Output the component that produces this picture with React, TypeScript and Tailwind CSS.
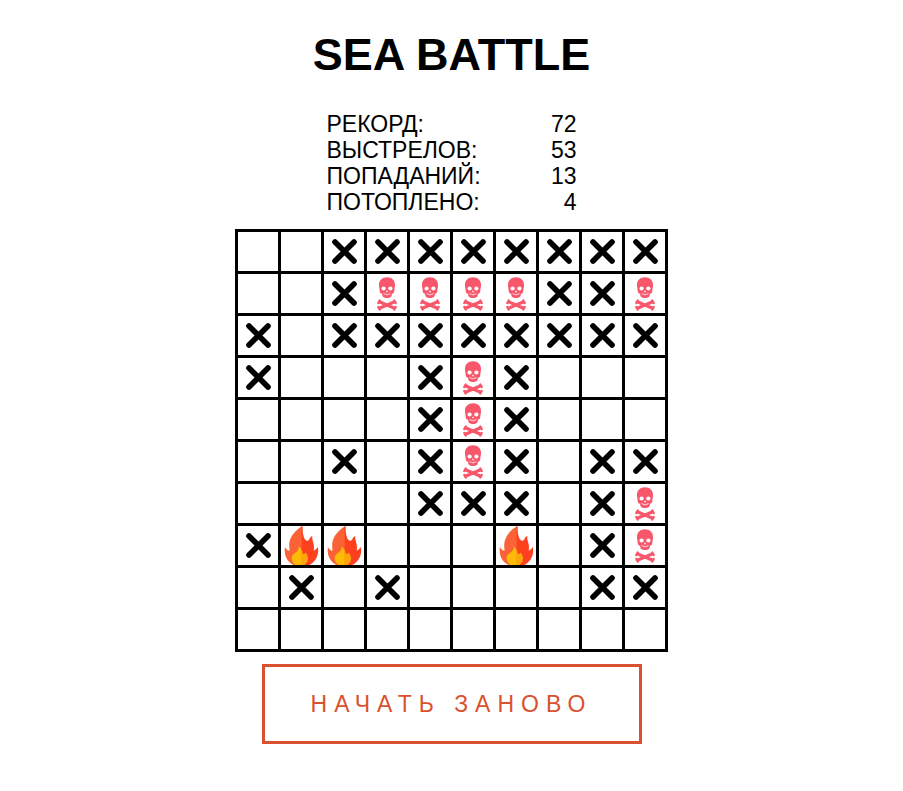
import React from "react";

type Mark = "." | "x" | "s" | "f";

// "." untouched, "x" miss, "s" sunk, "f" hit
const field: string[] = [
  "..xxxxxxxx",
  "..xssssxxs",
  "x.xxxxxxxx",
  "x...xsx...",
  "....xsx...",
  "..x.xsx.xx",
  "....xxx.xs",
  "xff...f.xs",
  ".x.x....xx",
  "..........",
];

const stats: [string, number][] = [
  ["РЕКОРД:", 72],
  ["ВЫСТРЕЛОВ:", 53],
  ["ПОПАДАНИЙ:", 13],
  ["ПОТОПЛЕНО:", 4],
];

const labels: Record<Mark, string> = {
  ".": "пусто",
  x: "мимо",
  s: "потоплен",
  f: "ранен",
};

function Miss() {
  return (
    <svg viewBox="0 0 40 39" className="block h-full w-full" aria-hidden="true">
      <path d="M11 10 30 29M30 10 11 29" stroke="#000" strokeWidth="5.6" strokeLinecap="round" />
    </svg>
  );
}

function Skull() {
  return (
    <svg viewBox="0 0 40 39" className="block h-full w-full" aria-hidden="true">
      <path
        fill="#f8566a"
        d="M20 3.300C15 3.300 12 6.500 12 11C12 13.500 12.600 14.800 12.700 17C12.800 18.700 13.600 19.500 15 19.800L15.500 22C16 23.500 18 24 20 24S24 23.500 24.500 22L25 19.800C26.400 19.500 27.200 18.700 27.300 17C27.400 14.800 28 13.500 28 11C28 6.500 25 3.300 20 3.300Z"
      />
      <ellipse cx="16.600" cy="14.500" rx="2.100" ry="1.900" fill="#fff" />
      <ellipse cx="23.400" cy="14.500" rx="2.100" ry="1.900" fill="#fff" />
      <path d="M20 16.300 18.800 18.300h2.400Z" fill="#fff" />
      <path d="M16.500 19.600Q20 22.200 23.500 19.600" stroke="#fff" strokeWidth=".8" fill="none" />
      <path d="M11.800 27.500 28.200 34.500M28.200 27.500 11.800 34.500" stroke="#f8566a" strokeWidth="3" />
      <path
        d="M12.700 26.500 11.300 29M27.300 26.500 28.700 29M11.300 33 12.700 35.500M28.700 33 27.300 35.500"
        stroke="#f8566a"
        strokeWidth="2.400"
        strokeLinecap="round"
      />
    </svg>
  );
}

function Fire() {
  return (
    <svg viewBox="0 0 40 39" className="block h-full w-full" aria-hidden="true">
      <path
        fill="#fb6235"
        d="M21 .2C15 3.500 8.500 10.500 8.200 18.500C8.100 21 8.700 23 8.300 25C6.200 24.300 5 22.800 3.900 21C2.800 28.500 5.500 35.500 12.500 39H21Z"
      />
      <path
        fill="#fd411f"
        d="M20.600 .4L21.700 0C21.400 4.500 22 9 23.200 12C24 14 25.600 15.300 27.200 14.500C29 13.600 28.300 11.200 31.300 10C30.700 15 34 18 32.700 24.500C34.600 23.800 35.900 22.600 36.900 21C38.300 28.500 35 35.500 28.500 39H20.600Z"
      />
      <path
        fill="#fdbb08"
        d="M17.600 20.800C19.500 21.800 20.400 23 20.800 24.500V39H14.500C9.500 35.500 9.500 29.500 14 27C16.600 25.500 17.800 23.500 17.600 20.800Z"
      />
      <path
        fill="#fea50b"
        d="M20.500 23.700C21.400 25.200 21.600 26.500 21.700 27.700C23 28.300 24.300 27.500 24.700 26.500C28.300 31 27.500 36 23.500 39H20.500Z"
      />
    </svg>
  );
}

function Cell({ mark, name }: { mark: Mark; name: string }) {
  return (
    <td className="bg-white p-0">
      <button type="button" aria-label={`${name}: ${labels[mark]}`} className="block h-[39px] w-10 cursor-pointer">
        {mark === "x" && <Miss />}
        {mark === "s" && <Skull />}
        {mark === "f" && <Fire />}
      </button>
    </td>
  );
}

export default function App() {
  return (
    <main className="flex min-h-screen flex-col items-center bg-white px-4 pt-[29px] pb-11 font-['Liberation_Sans',Arial,sans-serif] text-black">
      <h1 className="text-[45px] leading-[52px] font-bold">SEA BATTLE</h1>

      <table className="mt-[30px] w-[250px] max-w-full text-[23px] leading-[26px]">
        <tbody>
          {stats.map(([label, value]) => (
            <tr key={label}>
              <th scope="row" className="p-0 text-left font-normal">
                {label}
              </th>
              <td className="p-0 text-right">{value}</td>
            </tr>
          ))}
        </tbody>
      </table>

      <table className="mt-[14px] border-separate border-spacing-[3px] bg-black">
        <tbody>
          {field.map((row, y) => (
            <tr key={y}>
              {row.split("").map((mark, x) => (
                <Cell key={x} mark={mark as Mark} name={`${y + 1}-${x + 1}`} />
              ))}
            </tr>
          ))}
        </tbody>
      </table>

      <button
        type="button"
        className="mt-3 h-20 w-[380px] max-w-full cursor-pointer border-[3px] border-[#d9512f] text-[23px] leading-[26px] tracking-[7px] text-[#d9512f]"
      >
        НАЧАТЬ ЗАНОВО
      </button>
    </main>
  );
}
